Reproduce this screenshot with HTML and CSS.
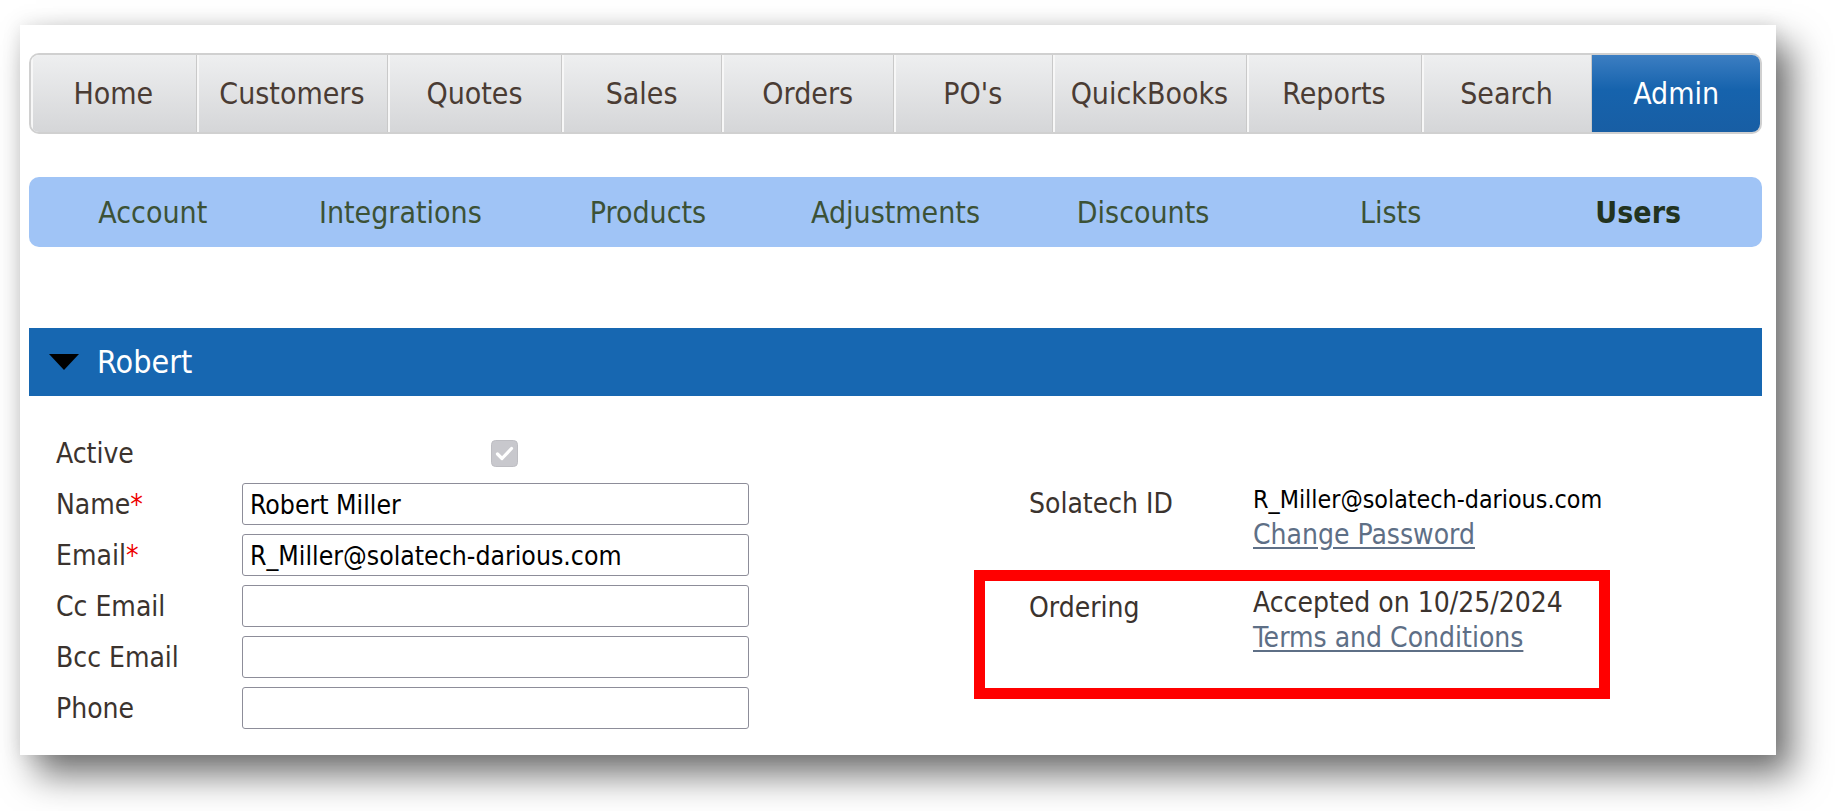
FILE: index.html
```html
<!DOCTYPE html>
<html lang="en">
<head>
  <meta charset="UTF-8" />
  <meta name="viewport" content="width=device-width, initial-scale=1.0"/>
  <title>Admin - Users</title>
  <link rel="stylesheet" href="styles.css">
</head>
<body>
  <div class="page">
    <div class="card">
      <nav class="main-nav">
        <a class="tab" href="#">Home</a>
        <a class="tab" href="#">Customers</a>
        <a class="tab" href="#">Quotes</a>
        <a class="tab" href="#">Sales</a>
        <a class="tab" href="#">Orders</a>
        <a class="tab" href="#">PO's</a>
        <a class="tab" href="#">QuickBooks</a>
        <a class="tab" href="#">Reports</a>
        <a class="tab" href="#">Search</a>
        <a class="tab active" href="#">Admin</a>
      </nav>

      <nav class="sub-nav">
        <a href="#">Account</a>
        <a href="#">Integrations</a>
        <a href="#">Products</a>
        <a href="#">Adjustments</a>
        <a href="#">Discounts</a>
        <a href="#">Lists</a>
        <a class="current" href="#">Users</a>
      </nav>

      <section class="user">
        <h2 class="user-head"><span class="caret"></span>Robert</h2>

        <div class="user-body">
          <div class="form-grid">
            <label>Active</label>
            <span class="check">
              <svg width="27" height="27" viewBox="0 0 27 27"><rect x="0.5" y="0.5" width="26" height="26" rx="4" fill="#c8c8cd" stroke="#bdbdc2"/><path d="M6.5 14 L11 18.5 L20.5 8.5" fill="none" stroke="#fff" stroke-width="3.2" stroke-linecap="round" stroke-linejoin="round"/></svg>
            </span>

            <label>Name<span class="req">*</span></label>
            <input type="text" value="Robert Miller" />

            <label>Email<span class="req">*</span></label>
            <input type="text" value="R_Miller@solatech-darious.com" />

            <label>Cc Email</label>
            <input type="text" />

            <label>Bcc Email</label>
            <input type="text" />

            <label>Phone</label>
            <input type="text" />
          </div>

          <div class="account-info">
            <div class="info-row">
              <span class="info-label">Solatech ID</span>
              <div class="info-value">
                <span class="login">R_Miller@solatech-darious.com</span>
                <a href="#">Change Password</a>
              </div>
            </div>

            <div class="info-row highlight">
              <span class="info-label">Ordering</span>
              <div class="info-value">
                <span>Accepted on 10/25/2024</span>
                <a href="#">Terms and Conditions</a>
              </div>
            </div>
          </div>
        </div>
      </section>
    </div>
  </div>
</body>
</html>
```

FILE: styles.css
```css
body { margin: 0; background: #fff; font-family: "DejaVu Sans Condensed", "DejaVu Sans", sans-serif; font-stretch: condensed; color: #3b332e; }
a { text-decoration: none; color: inherit; }

.page { padding: 25px 59px 56px 20px; }
.card { height: 730px; box-sizing: border-box; padding: 28px 14px 0 9px; background: #fff; box-shadow: 16px 20px 34px rgba(0,0,0,0.55), 0 0 18px rgba(0,0,0,0.1); }

/* top tabs */
.main-nav { display: grid; grid-template-columns: 166fr 192fr 174fr 161fr 172fr 159fr 195fr 175fr 171fr 168fr; height: 81px; box-sizing: border-box; border: 2px solid #d0d0d0; border-radius: 10px; overflow: hidden; }
.main-nav .tab { display: flex; align-items: center; justify-content: center; font-size: 30px; color: #4a3c34; background: linear-gradient(#eeeff0, #d5d6d8); border-right: 1px solid #c9c9c9; box-shadow: inset 2px 0 0 #f7f7f7; }
.main-nav .tab:last-child { border-right: none; }
.main-nav .tab.active { color: #fff; background: linear-gradient(#3c7ec2, #1663ad 45%, #185ea4); box-shadow: none; }

/* admin sub menu */
.sub-nav { display: grid; grid-template-columns: repeat(7, 1fr); height: 70px; margin-top: 43px; background: #a0c4f6; border-radius: 10px; }
.sub-nav a { display: flex; align-items: center; justify-content: center; font-size: 30px; color: #3c5236; }
.sub-nav a.current { font-weight: bold; color: #223320; }

/* user panel */
.user-head { display: flex; align-items: center; height: 68px; margin: 81px 0 0; padding-left: 20px; background: #1767b1; color: #fff; font-size: 32px; font-weight: normal; }
.caret { width: 0; height: 0; border-left: 15px solid transparent; border-right: 15px solid transparent; border-top: 16px solid #000; margin-right: 18px; }

.user-body { display: flex; align-items: flex-start; padding: 36px 0 0 27px; }
.form-grid { display: grid; grid-template-columns: 186px 507px; grid-auto-rows: 42px; row-gap: 9px; align-items: center; font-size: 28px; }
.form-grid .req { color: #e00; }
.form-grid input { height: 42px; box-sizing: border-box; margin: 0; padding: 0 7px; border: 1px solid #8d8d99; border-radius: 3px; font: inherit; font-size: 26.4px; color: #000; background: #fff; }
.check { justify-self: start; margin-left: 249px; height: 27px; }
.check svg { display: block; }

.account-info { margin: 51px 0 0 225px; width: 636px; font-size: 28px; }
.info-row { display: flex; padding-left: 55px; }
.info-label { width: 224px; line-height: 42px; flex-shrink: 0; }
.info-value { display: flex; flex-direction: column; align-items: flex-start; }
.info-value .login { font-size: 24.8px; line-height: 34px; color: #000; }
.info-value a { line-height: 36px; color: #5e6f86; text-decoration: underline; text-underline-offset: 3px; }

.info-row.highlight { margin-top: 17px; padding: 4px 0 33px 44px; border: 11px solid #f00; }
.highlight .info-label { line-height: 35px; margin-top: 5px; }
.highlight .info-value { line-height: 35px; }
.highlight .info-value a { line-height: 35px; }
```
